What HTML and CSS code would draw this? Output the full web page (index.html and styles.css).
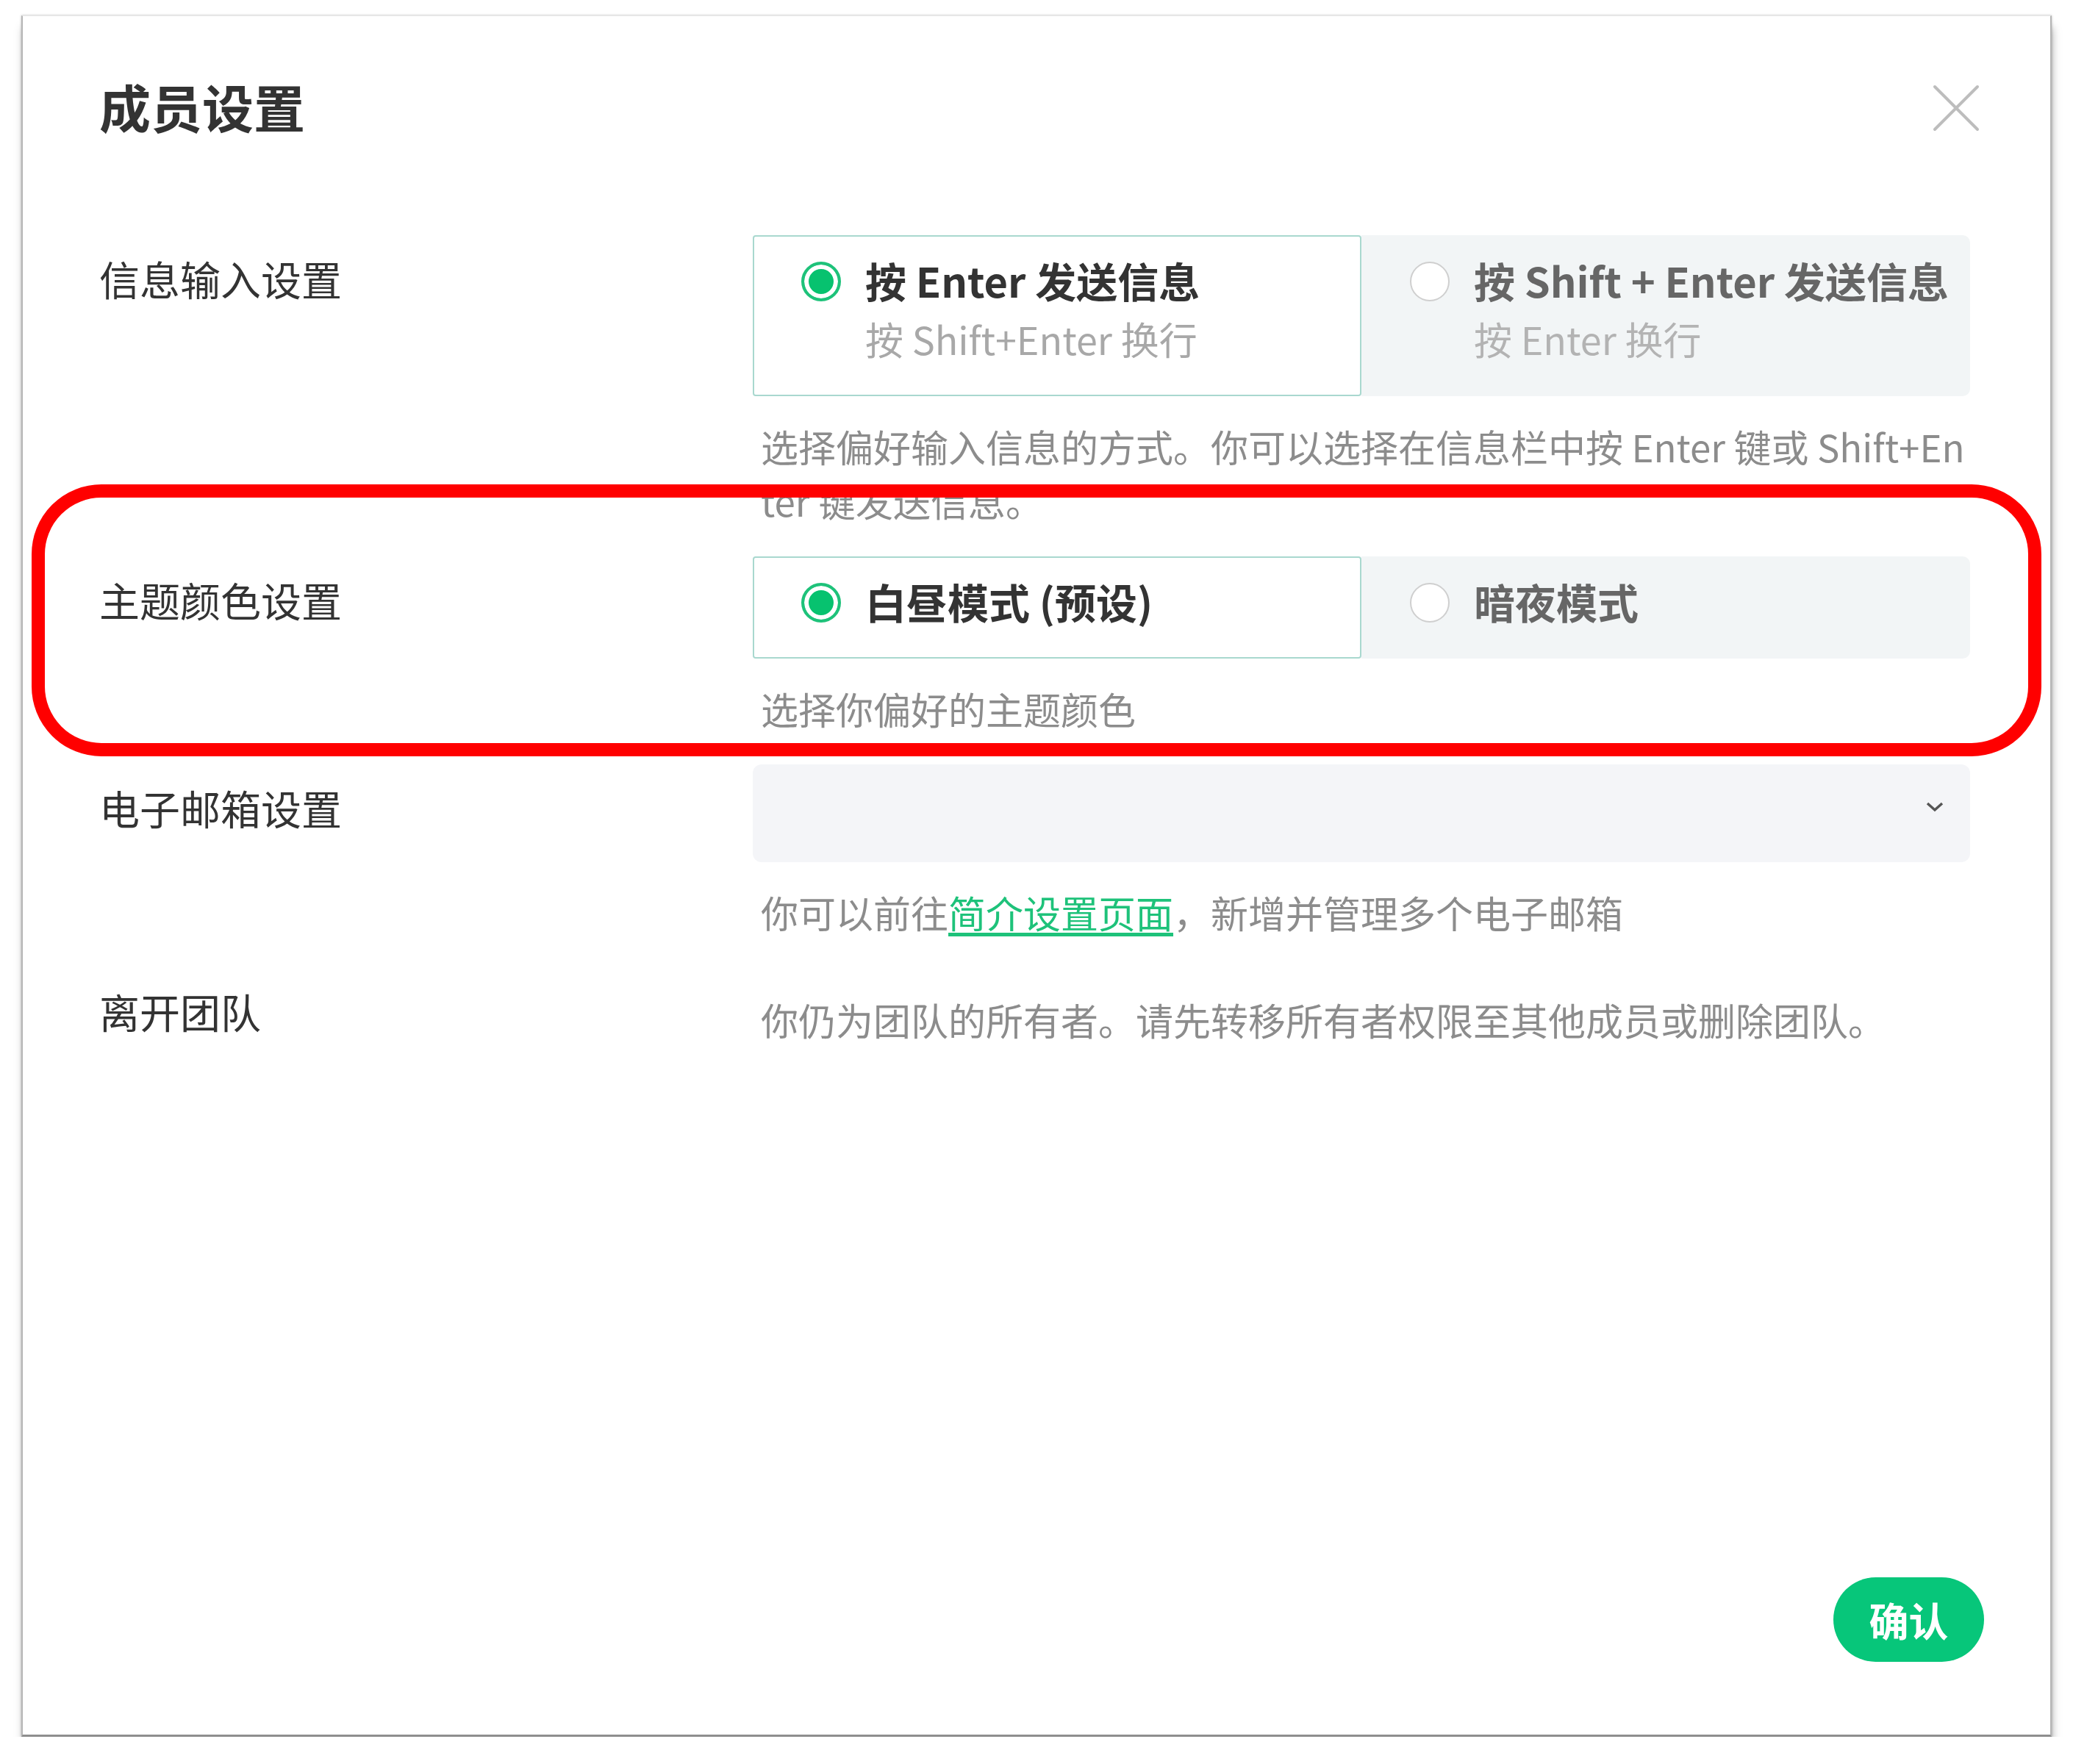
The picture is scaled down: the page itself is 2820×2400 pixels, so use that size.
FILE: index.html
```html
<!DOCTYPE html>
<html lang="zh-CN">
<head>
    <meta charset="UTF-8">
    <title>成员设置</title>
    <link rel="stylesheet" href="styles.css">
</head>
<body>
    <div class="dialog">
        <div class="dialog-header">
            <h1 class="dialog-title">成员设置</h1>
            <button class="close-btn" type="button">
                <svg width="64" height="64" viewBox="0 0 64 64">
                    <path d="M3 3 L61 61 M61 3 L3 61" stroke="#bdbdbd" stroke-width="4" fill="none" stroke-linecap="round"/>
                </svg>
            </button>
        </div>

        <div class="settings">
            <!-- 信息输入 -->
            <div class="setting-row">
                <div class="setting-label">信息输入设置</div>
                <div class="setting-body">
                    <div class="option-group">
                        <div class="option option-active">
                            <span class="radio radio-checked"></span>
                            <span class="option-text">
                                <span class="option-title">按 Enter 发送信息</span>
                                <span class="option-sub">按 Shift+Enter 换行</span>
                            </span>
                        </div>
                        <div class="option">
                            <span class="radio"></span>
                            <span class="option-text">
                                <span class="option-title">按 Shift + Enter 发送信息</span>
                                <span class="option-sub">按 Enter 换行</span>
                            </span>
                        </div>
                    </div>
                    <p class="setting-desc">选择偏好输入信息的方式。你可以选择在信息栏中按 Enter 键或 Shift+Enter 键发送信息。</p>
                </div>
            </div>

            <!-- 主题颜色 -->
            <div class="setting-row">
                <div class="setting-label">主题颜色设置</div>
                <div class="setting-body">
                    <div class="option-group">
                        <div class="option option-active">
                            <span class="radio radio-checked"></span>
                            <span class="option-text">
                                <span class="option-title">白昼模式 (预设)</span>
                            </span>
                        </div>
                        <div class="option">
                            <span class="radio"></span>
                            <span class="option-text">
                                <span class="option-title">暗夜模式</span>
                            </span>
                        </div>
                    </div>
                    <p class="setting-desc">选择你偏好的主题颜色</p>
                </div>
            </div>

            <!-- 电子邮箱 -->
            <div class="setting-row">
                <div class="setting-label">电子邮箱设置</div>
                <div class="setting-body">
                    <div class="select-box">
                        <svg class="chevron" width="24" height="14" viewBox="0 0 24 14">
                            <path d="M2 2 L12 11 L22 2" stroke="#555" stroke-width="3.5" fill="none"/>
                        </svg>
                    </div>
                    <p class="setting-desc">你可以前往<a href="#" class="link">简介设置页面</a>，新增并管理多个电子邮箱</p>
                </div>
            </div>

            <!-- 离开团队 -->
            <div class="setting-row">
                <div class="setting-label">离开团队</div>
                <div class="setting-body">
                    <p class="setting-desc setting-desc-only">你仍为团队的所有者。请先转移所有者权限至其他成员或删除团队。</p>
                </div>
            </div>
        </div>

        <div class="dialog-footer">
            <button class="confirm-btn" type="button">确认</button>
        </div>

        <div class="annotation"></div>
    </div>
</body>
</html>
```

FILE: styles.css
```css
body {
    margin: 0;
    background-color: #fff;
    font-family: "Noto Sans CJK SC", "Noto Sans", sans-serif;
    color: #333;
}

/* 弹窗 */
.dialog {
    position: relative;
    box-sizing: border-box;
    width: 2762px;
    height: 2342px;
    margin: 21px 0 0 29px;
    padding: 73px 109px 0 104px;
    background-color: #fff;
    display: flex;
    flex-direction: column;
    border-top: 1px solid #e6e6e6;
    border-left: 2px solid #b5b5b5;
    border-right: 2px solid #b5b5b5;
    border-bottom: 3px solid #8e8e8e;
    box-shadow: 0 0 3px rgba(0, 0, 0, 0.25), 2px 14px 12px -2px rgba(0, 0, 0, 0.35);
}

.dialog-header {
    display: flex;
    justify-content: space-between;
    align-items: center;
}

.dialog-title {
    margin: 0;
    font-size: 70px;
    line-height: 100px;
    font-weight: bold;
    color: #333;
}

.close-btn {
    background: none;
    border: none;
    padding: 0;
    margin-top: 4px;
    margin-right: -13px;
    width: 64px;
    height: 64px;
    cursor: pointer;
}

.close-btn svg {
    display: block;
}

/* 设置列表 */
.settings {
    padding-top: 90px;
}

.setting-row {
    display: grid;
    grid-template-columns: 889px 1fr;
    margin-top: 35px;
}

.setting-label {
    padding-top: 18px;
    font-size: 55px;
    line-height: 80px;
    color: #333;
}

.setting-desc {
    margin: 31px 0 0;
    padding: 0 0 4px 11px;
    font-size: 51px;
    line-height: 74px;
    color: #8c8c8c;
    word-break: break-all;
}

.setting-desc-only {
    margin-top: 33px;
}

.link {
    color: #1ec27a;
    text-decoration: underline;
    text-underline-offset: 6px;
}

/* 选项 */
.option-group {
    display: flex;
}

.option {
    flex: 1;
    display: flex;
    align-items: flex-start;
    padding: 19px 20px 36px 64px;
    border: 2px solid transparent;
    background-color: #f2f5f6;
    border-radius: 0 10px 10px 0;
    cursor: pointer;
}

.option-active {
    background-color: #fff;
    border-color: #a9d8cf;
    border-radius: 4px;
}

.radio {
    flex-shrink: 0;
    box-sizing: border-box;
    width: 54px;
    height: 54px;
    margin-top: 15px;
    margin-right: 33px;
    border-radius: 50%;
    border: 2px solid #cfcfcf;
    background-color: #fff;
}

.radio-checked {
    border: 4px solid #1ec27a;
    background-color: #07c26f;
    box-shadow: inset 0 0 0 6px #fff;
}

.option-text {
    display: flex;
    flex-direction: column;
}

.option-title {
    font-size: 56px;
    line-height: 80px;
    font-weight: bold;
    color: #666;
}

.option-active .option-title {
    color: #333;
}

.option-sub {
    font-size: 52px;
    line-height: 80px;
    color: #b3b3b3;
}

.option-active .option-sub {
    color: #a8a8a8;
}

/* 下拉框 */
.select-box {
    height: 133px;
    background-color: #f4f5f8;
    border-radius: 12px;
    display: flex;
    align-items: center;
    justify-content: flex-end;
    padding-right: 36px;
}

.chevron {
    margin-bottom: 18px;
}

/* 底部 */
.dialog-footer {
    margin-top: auto;
    margin-right: -19px;
    padding-bottom: 99px;
    display: flex;
    justify-content: flex-end;
}

.confirm-btn {
    width: 205px;
    height: 115px;
    border: none;
    border-radius: 58px;
    background-color: #07c67a;
    color: #fff;
    font-family: inherit;
    font-size: 54px;
    font-weight: bold;
    cursor: pointer;
}

/* 红框标注 */
.annotation {
    position: absolute;
    left: 12px;
    top: 637px;
    width: 2734px;
    height: 370px;
    box-sizing: border-box;
    border: 18px solid #ff0000;
    border-radius: 95px;
    pointer-events: none;
}
```
